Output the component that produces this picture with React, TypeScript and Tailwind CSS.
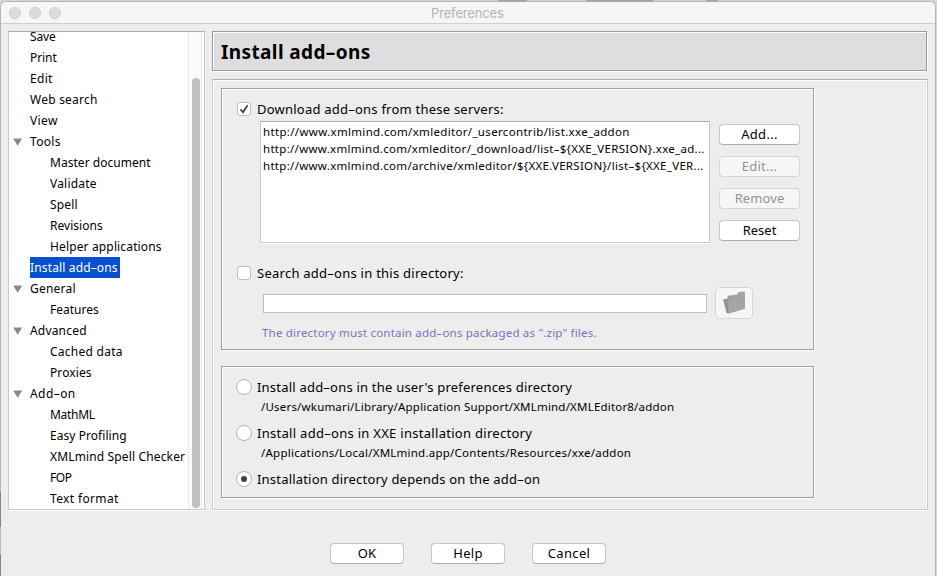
import React, { useLayoutEffect, useRef, useState } from "react";

/** Single line of text, tracked so that it occupies the given width. */
function Label({ text, width, className = "" }: { text: string; width: number; className?: string }) {
  const ref = useRef<HTMLSpanElement>(null);
  const [spacing, setSpacing] = useState(0);
  useLayoutEffect(() => {
    if (!ref.current) return;
    const natural = ref.current.getBoundingClientRect().width - spacing * text.length;
    setSpacing((width - 0.3 - natural) / text.length);
  }, [text, width]);
  return (
    <span ref={ref} className={`inline-block shrink-0 whitespace-pre ${className}`} style={{ letterSpacing: spacing }}>
      {text}
    </span>
  );
}

const tree: { text: string; width: number; level: number; open?: boolean; selected?: boolean }[] = [
  { text: "Save", width: 26, level: 0 },
  { text: "Print", width: 27, level: 0 },
  { text: "Edit", width: 23, level: 0 },
  { text: "Web search", width: 68, level: 0 },
  { text: "View", width: 28, level: 0 },
  { text: "Tools", width: 31, level: 0, open: true },
  { text: "Master document", width: 101, level: 1 },
  { text: "Validate", width: 47, level: 1 },
  { text: "Spell", width: 28, level: 1 },
  { text: "Revisions", width: 53, level: 1 },
  { text: "Helper applications", width: 112, level: 1 },
  { text: "Install add–ons", width: 88, level: 0, selected: true },
  { text: "General", width: 46, level: 0, open: true },
  { text: "Features", width: 49, level: 1 },
  { text: "Advanced", width: 57, level: 0, open: true },
  { text: "Cached data", width: 73, level: 1 },
  { text: "Proxies", width: 42, level: 1 },
  { text: "Add–on", width: 46, level: 0, open: true },
  { text: "MathML", width: 45, level: 1 },
  { text: "Easy Profiling", width: 77, level: 1 },
  { text: "XMLmind Spell Checker", width: 135.5, level: 1 },
  { text: "FOP", width: 22, level: 1 },
  { text: "Text format", width: 69, level: 1 },
];

function Sidebar() {
  return (
    <div className="flex h-[479px] w-[197px] shrink-0 overflow-hidden border border-[#c8c8c8] border-t-[#adadad] bg-white shadow-[0_1px_0_#fff]">
      <div className="-mt-1.5 flex w-[179px] shrink-0 flex-col">
        {tree.map((n) => (
          <div key={n.text} className="flex h-[21px] shrink-0 items-center">
            <div className="flex w-[21px] shrink-0 pl-1">
              {n.open && (
                <svg width="10" height="8" viewBox="0 0 10 8">
                  <path d="M0.2 0.5h9L4.7 7.8z" fill="#888" />
                </svg>
              )}
            </div>
            {n.level === 1 && <div className="w-5 shrink-0" />}
            <div className={n.selected ? "flex h-[21px] w-[90px] items-center bg-[#0850d0] text-white" : "flex items-center"}>
              <Label text={n.text} width={n.width} />
            </div>
          </div>
        ))}
      </div>
      <div className="flex w-[14px] shrink-0 justify-center border-x border-[#e8e8e8] bg-[#fafafa] pt-[46px] pb-px pl-px">
        <div className="w-2 rounded-full bg-[#c1c1c1]" />
      </div>
    </div>
  );
}

function PushButton({ text, width, className = "", disabled = false }: { text: string; width: number; className?: string; disabled?: boolean }) {
  return (
    <button
      className={`flex h-[21px] items-center justify-center rounded-[4px] border pt-px ${
        disabled ? "border-[#d6d6d6] bg-[#f6f6f6] text-[#929292]" : "border-[#c6c6c6] border-b-[#ababab] bg-white text-black"
      } ${className}`}
    >
      <Label text={text} width={width} className="text-[13px]" />
    </button>
  );
}

function CheckBox({ checked = false }: { checked?: boolean }) {
  return (
    <span className="mb-px flex size-[14px] shrink-0 items-center justify-center rounded-[3px] border border-[#bdbdbd] bg-white">
      {checked && (
        <svg width="12" height="12" viewBox="0 0 12 12" fill="none" stroke="#404040" strokeWidth="1.7">
          <path d="M2.5 6.4 5 9.3 9.6 2.2" />
        </svg>
      )}
    </span>
  );
}

function Radio({ checked = false }: { checked?: boolean }) {
  return (
    <span className="flex size-4 shrink-0 items-center justify-center rounded-full border border-[#b4b4b4] bg-white">
      {checked && <span className="size-1.5 rounded-full bg-[#404040]" />}
    </span>
  );
}

const groupBox = "flex w-[593px] flex-col border border-[#a0a0a0] shadow-[inset_1px_1px_0_#fff,1px_1px_0_#fff]";

function ServersGroup() {
  return (
    <div className={`${groupBox} h-[262px]`}>
      <div className="mt-[11px] ml-[15px] flex h-[19px] items-center gap-[6px]">
        <CheckBox checked />
        <Label text="Download add–ons from these servers:" width={247} className="text-[13px]" />
      </div>
      <div className="mt-[2px] ml-[38px] flex">
        <div className="h-[122px] w-[450px] border border-[#c8c8c8] border-t-[#adadad] bg-white pt-px pl-[2px] text-[11.5px] leading-[17px] shadow-[0_1px_0_#fff]">
          <div className="h-[17px]"><Label text="http://www.xmlmind.com/xmleditor/_usercontrib/list.xxe_addon" width={367} /></div>
          <div className="h-[17px]"><Label text="http://www.xmlmind.com/xmleditor/_download/list–${XXE_VERSION}.xxe_ad..." width={442} /></div>
          <div className="h-[17px]"><Label text="http://www.xmlmind.com/archive/xmleditor/${XXE.VERSION}/list–${XXE_VER..." width={441} /></div>
        </div>
        <div className="mt-[3px] ml-[9px] flex flex-col gap-[11px]">
          <PushButton text="Add..." width={37} className="w-[81px]" />
          <PushButton text="Edit..." width={36} disabled className="w-[81px]" />
          <PushButton text="Remove" width={50} disabled className="w-[81px]" />
          <PushButton text="Reset" width={34} className="w-[81px]" />
        </div>
      </div>
      <div className="mt-[21px] ml-[15px] flex h-[19px] items-center gap-[6px]">
        <CheckBox />
        <Label text="Search add–ons in this directory:" width={207} className="text-[13px]" />
      </div>
      <div className="mt-[4px] ml-[41px] flex items-center gap-[8px]">
        <div className="h-[19px] w-[444px] border border-[#bcbcbc] bg-white" />
        <button className="flex h-8 w-[38px] items-center justify-center rounded-[5px] border border-[#d6d6d6] bg-[#f6f6f6]">
          <svg width="24" height="24" viewBox="0 0 24 24">
            <path d="M1 8.5 6 7.5V22L4.7 22.4z" fill="#929292" />
            <path d="M6 5.2 15.5 4 16.5 1.5 22.5 1v16.5L6 22.3z" fill="#a5a5a5" stroke="#929292" strokeWidth=".7" />
            <path d="M6.4 7.5 19 6.2 22.4 17.4" fill="none" stroke="#999" strokeWidth=".6" />
          </svg>
        </button>
      </div>
      <div className="mt-[5px] ml-[40px] flex h-[18px] items-center text-[11.5px] text-[#7474bf]">
        <Label text={'The directory must contain add–ons packaged as ".zip" files.'} width={335} />
      </div>
    </div>
  );
}

function Choice({ text, width, checked = false }: { text: string; width: number; checked?: boolean }) {
  return (
    <div className="ml-[14px] flex h-5 items-center gap-[5px]">
      <Radio checked={checked} />
      <Label text={text} width={width} className="pt-[2px] text-[13px]" />
    </div>
  );
}

function LocationGroup() {
  return (
    <div className={`${groupBox} mt-4 h-[132px] pt-[10px]`}>
      <Choice text="Install add–ons in the user's preferences directory" width={315.5} />
      <div className="mb-[6px] ml-[39px] flex h-5 items-center text-[11.5px]">
        <Label text="/Users/wkumari/Library/Application Support/XMLmind/XMLEditor8/addon" width={413.5} />
      </div>
      <Choice text="Install add–ons in XXE installation directory" width={275.5} />
      <div className="mb-[6px] ml-[39px] flex h-5 items-center text-[11.5px]">
        <Label text="/Applications/Local/XMLmind.app/Contents/Resources/xxe/addon" width={370.5} />
      </div>
      <Choice text="Installation directory depends on the add–on" width={283.5} checked />
    </div>
  );
}

export default function App() {
  return (
    <div className="flex h-[576px] w-[937px] overflow-hidden bg-[#d3d3d3] pt-[2px] pl-px font-['Noto_Sans','Open_Sans',sans-serif] text-[12px] text-black">
      <div className="relative flex h-[575px] w-[934px] shrink-0 flex-col rounded-t-[5px] bg-[#ededed] shadow-[0_0_0_1px_#b5b5b5]">
        <div className="flex h-[22px] shrink-0 items-center rounded-t-[5px] border-b border-[#cecece] bg-[#f6f6f6]">
          <div className="flex w-[430px] shrink-0 gap-2 pl-2">
            <span className="size-3 rounded-full border border-[#cecece] bg-[#dcdcdc]" />
            <span className="size-3 rounded-full border border-[#cecece] bg-[#dcdcdc]" />
            <span className="size-3 rounded-full border border-[#cecece] bg-[#dcdcdc]" />
          </div>
          <Label text="Preferences" width={73} className="pt-[2px] font-[Inter] text-[13px] text-[#b4b4b4]" />
        </div>
        <div className="mt-[7px] ml-[7px] flex shrink-0">
          <Sidebar />
          <div className="ml-[7px] flex flex-col">
            <div className="flex h-[40px] w-[715px] items-center border border-[#999] bg-[#dedede] pt-[2px] pl-2 shadow-[inset_1px_1px_0_#fff,1px_1px_0_#fff]">
              <Label text="Install add–ons" width={150} className="text-[19px] font-bold" />
            </div>
            <div className="mt-[8px] h-[431px] w-[716px] border border-[#cacaca] border-t-[#b0b0b0] pt-[8px] pl-[8px] shadow-[inset_1px_1px_0_#fff,inset_-1px_0_0_#fff,0_1px_0_#fff]">
              <ServersGroup />
              <LocationGroup />
            </div>
          </div>
        </div>
        <div className="mt-[33px] ml-[329px] flex gap-[27px]">
          <PushButton text="OK" width={19} className="w-[74px]" />
          <PushButton text="Help" width={30} className="w-[74px]" />
          <PushButton text="Cancel" width={43} className="w-[74px]" />
        </div>
        <div className="absolute -top-[2px] left-[497px] flex h-[2px] items-stretch">
          <div className="w-[29px] bg-[#a5a5a5]" />
          <div className="ml-[59px] w-[67px] bg-[#a5a5a5]" />
          <div className="ml-[53px] w-[12px] bg-[#a5a5a5]" />
        </div>
        <div className="absolute bottom-[1px] -left-px flex h-[84px] w-px flex-col">
          <div className="h-[35px] bg-[#858585]" />
          <div className="h-[27px] bg-[#c0c0c0]" />
          <div className="h-[22px] bg-[#858585]" />
        </div>
      </div>
    </div>
  );
}
